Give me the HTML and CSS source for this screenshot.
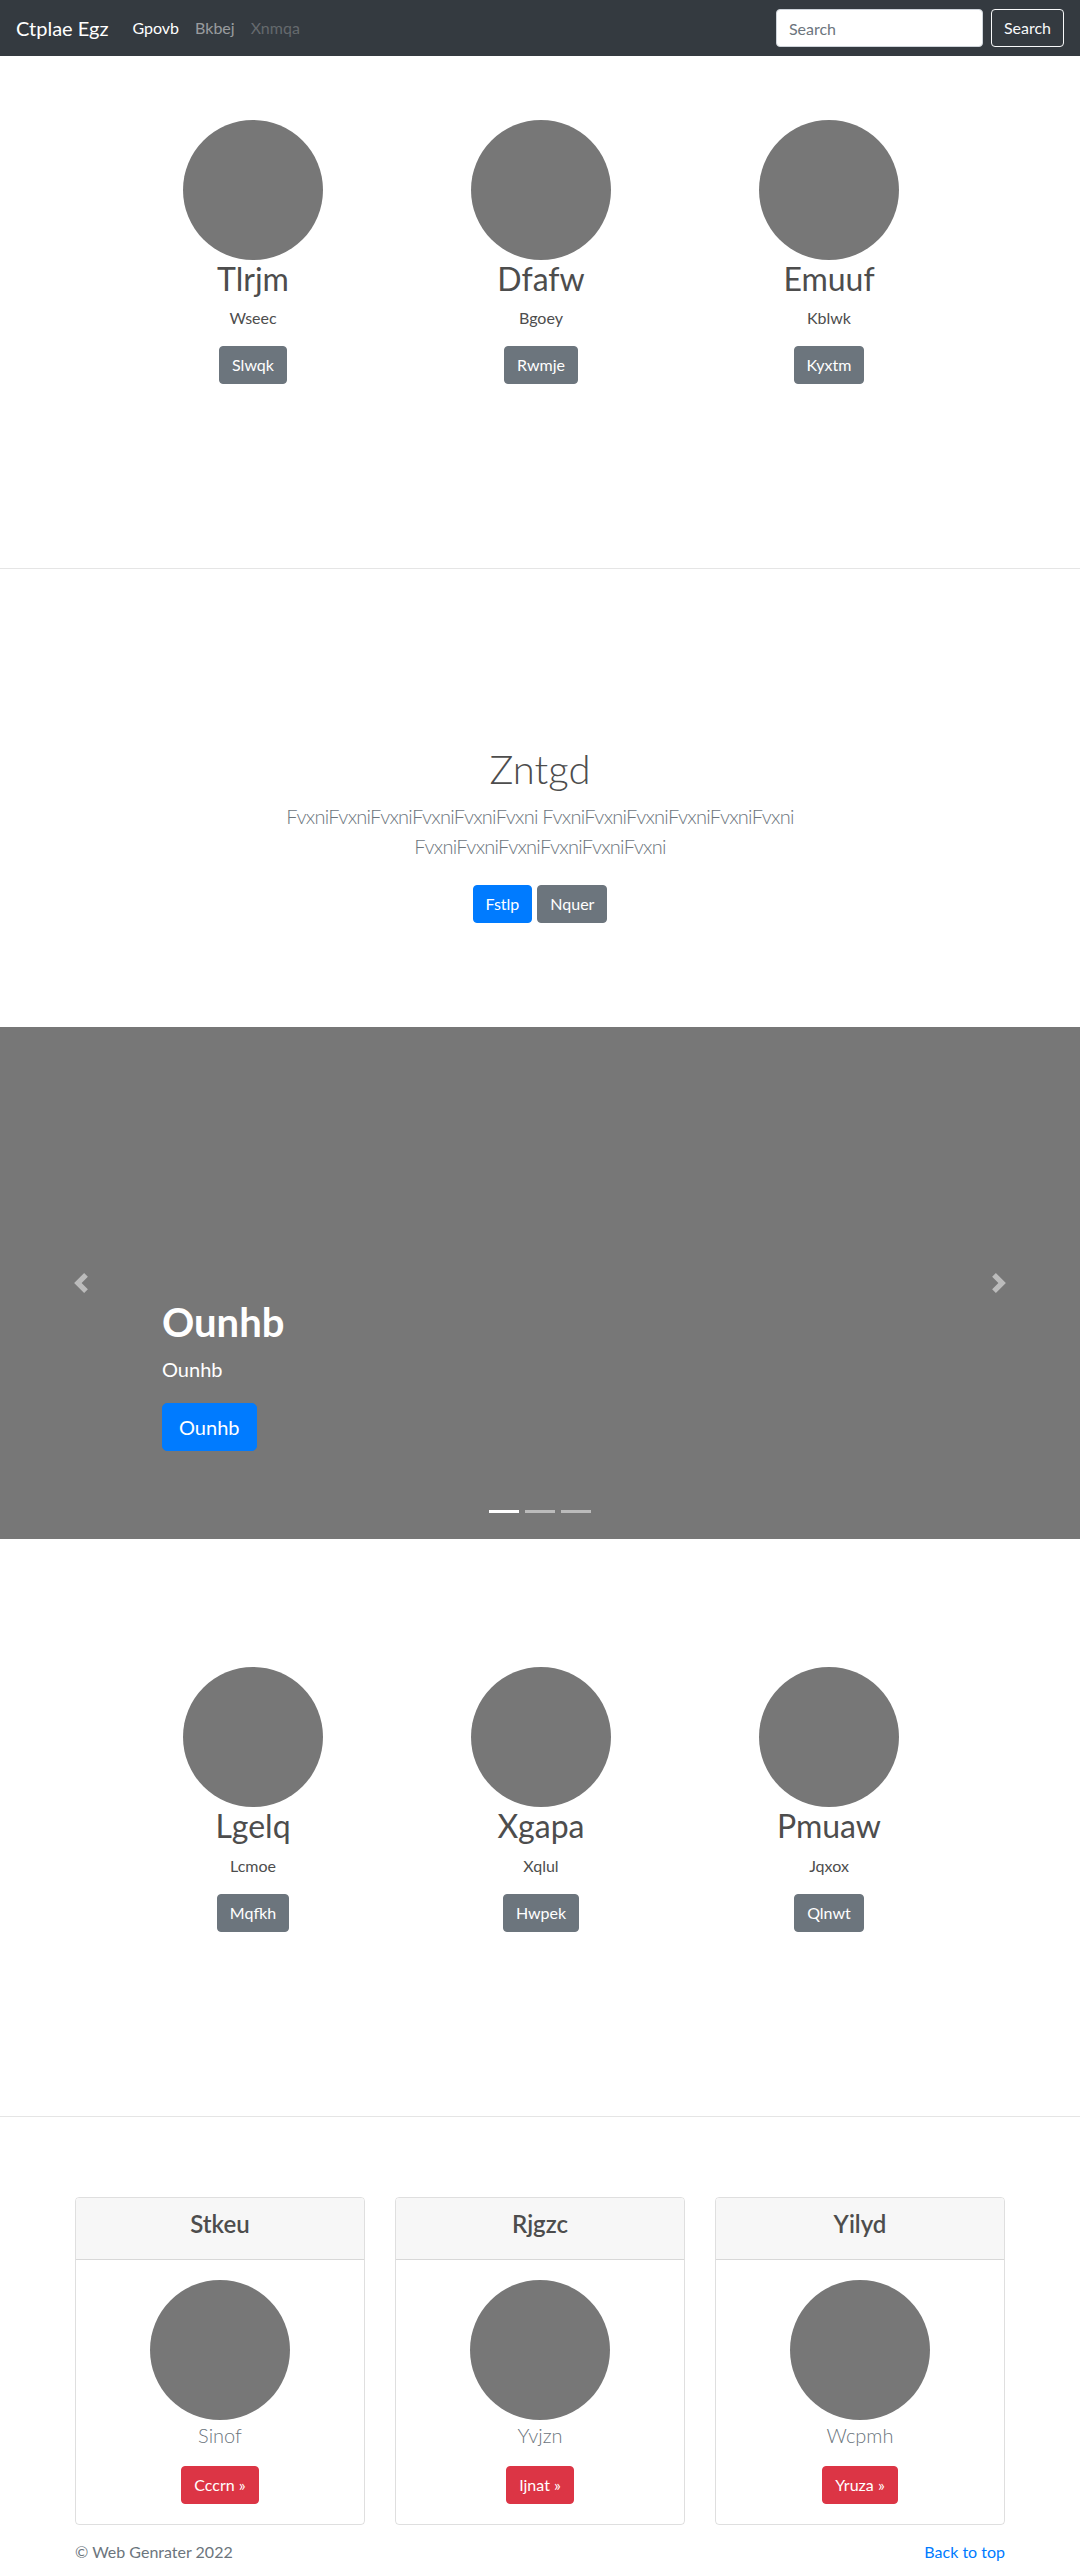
FILE: index.html
```html
<!DOCTYPE html>
<html lang="en">
<head>
<meta charset="utf-8">
<title>Ctplae Egz</title>
<link rel="stylesheet" href="styles.css">
</head>
<body>
<nav class="navbar">
  <a class="brand" href="#">Ctplae Egz</a>
  <ul class="nav">
    <li><a class="nav-link active" href="#">Gpovb</a></li>
    <li><a class="nav-link" href="#">Bkbej</a></li>
    <li><a class="nav-link disabled" href="#">Xnmqa</a></li>
  </ul>
  <form class="search">
    <input class="search-input" type="text" placeholder="Search">
    <button class="btn btn-outline-light" type="button">Search</button>
  </form>
</nav>

<section class="marketing">
  <div class="mrow">
    <div class="mcol">
      <div class="circle"></div>
      <h2>Tlrjm</h2>
      <p>Wseec</p>
      <p class="btn-line"><a class="btn btn-secondary" href="#">Slwqk</a></p>
    </div>
    <div class="mcol">
      <div class="circle"></div>
      <h2>Dfafw</h2>
      <p>Bgoey</p>
      <p class="btn-line"><a class="btn btn-secondary" href="#">Rwmje</a></p>
    </div>
    <div class="mcol">
      <div class="circle"></div>
      <h2>Emuuf</h2>
      <p>Kblwk</p>
      <p class="btn-line"><a class="btn btn-secondary" href="#">Kyxtm</a></p>
    </div>
  </div>
</section>

<hr class="divider">

<section class="jumbo">
  <div class="jumbo-inner">
    <h1 class="jumbo-heading">Zntgd</h1>
    <p class="lead muted jumbo-lead">FvxniFvxniFvxniFvxniFvxniFvxni FvxniFvxniFvxniFvxniFvxniFvxni FvxniFvxniFvxniFvxniFvxniFvxni</p>
    <p class="jumbo-btns">
      <a class="btn btn-primary" href="#">Fstlp</a>
      <a class="btn btn-secondary" href="#">Nquer</a>
    </p>
  </div>
</section>

<div class="carousel">
  <a class="ctrl ctrl-prev" href="#">
    <svg width="20" height="20" viewBox="0 0 8 8"><path fill="#fff" d="M5.25 0l-4 4 4 4 1.5-1.5L4.25 4l2.5-2.5L5.25 0z"/></svg>
  </a>
  <a class="ctrl ctrl-next" href="#">
    <svg width="20" height="20" viewBox="0 0 8 8"><path fill="#fff" d="M2.75 0l-1.5 1.5L3.75 4l-2.5 2.5L2.75 8l4-4-4-4z"/></svg>
  </a>
  <div class="caption">
    <h1>Ounhb</h1>
    <p class="caption-text">Ounhb</p>
    <p class="caption-btn"><a class="btn btn-lg btn-primary" href="#">Ounhb</a></p>
  </div>
  <ol class="indicators">
    <li class="active"></li>
    <li></li>
    <li></li>
  </ol>
</div>

<section class="marketing">
  <div class="mrow">
    <div class="mcol">
      <div class="circle"></div>
      <h2>Lgelq</h2>
      <p>Lcmoe</p>
      <p class="btn-line"><a class="btn btn-secondary" href="#">Mqfkh</a></p>
    </div>
    <div class="mcol">
      <div class="circle"></div>
      <h2>Xgapa</h2>
      <p>Xqlul</p>
      <p class="btn-line"><a class="btn btn-secondary" href="#">Hwpek</a></p>
    </div>
    <div class="mcol">
      <div class="circle"></div>
      <h2>Pmuaw</h2>
      <p>Jqxox</p>
      <p class="btn-line"><a class="btn btn-secondary" href="#">Qlnwt</a></p>
    </div>
  </div>
</section>

<hr class="divider">

<section class="cards">
  <div class="card">
    <div class="card-header"><h4>Stkeu</h4></div>
    <div class="card-body">
      <div class="circle"></div>
      <p class="lead muted">Sinof</p>
      <p class="btn-line"><a class="btn btn-danger" href="#">Cccrn »</a></p>
    </div>
  </div>
  <div class="card">
    <div class="card-header"><h4>Rjgzc</h4></div>
    <div class="card-body">
      <div class="circle"></div>
      <p class="lead muted">Yvjzn</p>
      <p class="btn-line"><a class="btn btn-danger" href="#">Ijnat »</a></p>
    </div>
  </div>
  <div class="card">
    <div class="card-header"><h4>Yilyd</h4></div>
    <div class="card-body">
      <div class="circle"></div>
      <p class="lead muted">Wcpmh</p>
      <p class="btn-line"><a class="btn btn-danger" href="#">Yruza »</a></p>
    </div>
  </div>
</section>

<footer class="footer">
  <p>© Web Genrater 2022</p>
  <p><a class="back-top" href="#">Back to top</a></p>
</footer>
</body>
</html>
```

FILE: styles.css
```css
* { box-sizing: border-box; }

html, body {
  margin: 0;
  padding: 0;
}

body {
  font-family: "Lato", "Open Sans", "Noto Sans", sans-serif;
  font-size: 16px;
  line-height: 1.5;
  color: #4d4d4d;
  background: #fff;
}

a { text-decoration: none; }

h1, h2, h4, p { margin: 0; }

/* Navbar */
.navbar {
  display: flex;
  align-items: center;
  height: 56px;
  padding: 8px 16px;
  background: #343a40;
}

.brand {
  font-size: 20px;
  line-height: 30px;
  padding: 5px 0;
  margin-right: 16px;
  color: #fff;
}

.nav {
  display: flex;
  list-style: none;
  margin: 0;
  padding: 0;
  flex: 1;
}

.nav-link {
  display: block;
  padding: 8px 8px;
  line-height: 24px;
  color: rgba(255, 255, 255, .5);
}

.nav-link.active { color: #fff; }
.nav-link.disabled { color: rgba(255, 255, 255, .25); }

.search {
  display: flex;
  align-items: center;
}

.search-input {
  width: 207px;
  height: 38px;
  padding: 6px 12px;
  font-family: inherit;
  font-size: 16px;
  line-height: 24px;
  color: #495057;
  background: #fff;
  border: 1px solid #ced4da;
  border-radius: 4px;
  margin-right: 8px;
}

.search-input::placeholder { color: #6c757d; }

/* Buttons */
.btn {
  display: inline-block;
  padding: 6px 12px;
  font-family: inherit;
  font-size: 16px;
  line-height: 24px;
  border: 1px solid transparent;
  border-radius: 4px;
  color: #fff;
  text-align: center;
  cursor: pointer;
}

.btn-outline-light {
  background: transparent;
  color: #f8f9fa;
  border-color: #f8f9fa;
}

.btn-secondary { background: #6c757d; border-color: #6c757d; }
.btn-primary { background: #007bff; border-color: #007bff; }
.btn-danger { background: #dc3545; border-color: #dc3545; }

.btn-lg {
  padding: 8px 16px;
  font-size: 20px;
  line-height: 30px;
  border-radius: 5px;
}

.btn-line {
  display: flex;
  justify-content: center;
  margin-bottom: 16px;
}

/* Circles */
.circle {
  width: 140px;
  height: 140px;
  border-radius: 50%;
  background: #777;
  margin: 0 auto;
}

/* Marketing */
.marketing {
  padding: 64px 0 64px 2px;
}

.mrow {
  width: 864px;
  margin: 0 auto;
  display: grid;
  grid-template-columns: repeat(3, 1fr);
}

.mcol {
  text-align: center;
  margin-bottom: 24px;
}

.mcol h2 {
  font-size: 32px;
  font-weight: 400;
  line-height: 1.2;
  margin-bottom: 8px;
}

.mcol p {
  margin: 0 12px 16px;
}

.divider {
  margin: 80px 0;
  border: 0;
  border-top: 1px solid rgba(0, 0, 0, .1);
  height: 0;
}

/* Jumbotron */
.jumbo {
  padding: 96px 0;
  text-align: center;
}

.jumbo-inner {
  max-width: 640px;
  margin: 0 auto;
  padding: 0 15px;
}

.jumbo-heading {
  font-size: 40px;
  font-weight: 300;
  line-height: 1.2;
  margin-bottom: 8px;
}

.lead {
  font-size: 20px;
  font-weight: 300;
  line-height: 30px;
  margin-bottom: 16px;
}

.jumbo-lead { letter-spacing: -0.75px; }

.muted { color: #6c757d; }

.jumbo-btns {
  display: flex;
  justify-content: center;
  gap: 5px;
}

.jumbo-btns .btn { margin: 8px 0; }

/* Carousel */
.carousel {
  position: relative;
  height: 512px;
  background: #777;
  margin-bottom: 64px;
}

.ctrl {
  position: absolute;
  top: 0;
  bottom: 0;
  width: 15%;
  display: flex;
  align-items: center;
  justify-content: center;
  opacity: .5;
}

.ctrl-prev { left: 0; }
.ctrl-next { right: 0; }

.caption {
  position: absolute;
  left: 15%;
  right: 15%;
  bottom: 48px;
  padding: 20px 0;
  color: #fff;
  text-align: left;
}

.caption h1 {
  font-size: 40px;
  font-weight: 700;
  line-height: 48px;
  margin-bottom: 8px;
}

.caption .caption-text {
  font-size: 20px;
  line-height: 30px;
  margin-bottom: 16px;
}

.caption .caption-btn {
  display: flex;
  padding: 3px 0 4px;
  margin-bottom: 16px;
}

.indicators {
  position: absolute;
  left: 0;
  right: 0;
  bottom: 26px;
  margin: 0;
  padding: 0;
  list-style: none;
  display: flex;
  justify-content: center;
  gap: 6px;
}

.indicators li {
  width: 30px;
  height: 3px;
  background: #fff;
  opacity: .5;
}

.indicators li.active { opacity: 1; }

/* Cards */
.cards {
  width: 930px;
  margin: 0 auto;
  display: grid;
  grid-template-columns: repeat(3, 1fr);
  gap: 30px;
}

.card {
  border: 1px solid rgba(0, 0, 0, .125);
  border-radius: 4px;
  overflow: hidden;
}

.card-header {
  padding: 12px 20px;
  background: #f7f7f7;
  border-bottom: 1px solid rgba(0, 0, 0, .125);
  text-align: center;
}

.card-header h4 {
  font-size: 24px;
  font-weight: 600;
  line-height: 1.2;
  margin-bottom: 8px;
}

.card-body {
  padding: 20px;
  text-align: center;
}

.card-body .btn-line { margin-bottom: 0; }

/* Footer */
.footer {
  width: 930px;
  margin: 15px auto 0;
  display: flex;
  justify-content: space-between;
  color: #6c757d;
  padding-bottom: 16px;
}

.back-top { color: #007bff; }
```
